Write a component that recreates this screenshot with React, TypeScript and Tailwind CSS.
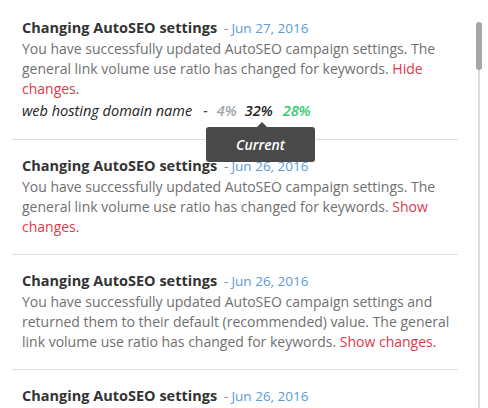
import React from 'react';

type Item = {
  date: string;
  body: React.ReactNode;
  keywords?: boolean;
};

const Link = ({ children }: { children: React.ReactNode }) => (
  <span className="text-[#e0394b]">{children}</span>
);

const items: Item[] = [
  {
    date: 'Jun 27, 2016',
    body: (
      <>
        You have successfully updated AutoSEO campaign settings. The
        <br />
        general link volume use ratio has changed for keywords. <Link>Hide</Link>
        <br />
        <Link>changes.</Link>
      </>
    ),
    keywords: true,
  },
  {
    date: 'Jun 26, 2016',
    body: (
      <>
        You have successfully updated AutoSEO campaign settings. The
        <br />
        general link volume use ratio has changed for keywords. <Link>Show</Link>
        <br />
        <Link>changes.</Link>
      </>
    ),
  },
  {
    date: 'Jun 26, 2016',
    body: (
      <>
        You have successfully updated AutoSEO campaign settings and
        <br />
        returned them to their default (recommended) value. The general
        <br />
        link volume use ratio has changed for keywords. <Link>Show changes.</Link>
      </>
    ),
  },
  {
    date: 'Jun 26, 2016',
    body: (
      <>
        You have successfully updated AutoSEO campaign settings. The
        <br />
        general link volume use ratio has changed for keywords. <Link>Show</Link>
        <br />
        <Link>changes.</Link>
      </>
    ),
  },
];

const App = () => {
  return (
    <div
      className="relative h-[408px] w-[488px] overflow-hidden bg-white"
      style={{ fontFamily: '"Open Sans", "Liberation Sans", sans-serif' }}
    >
      {/* Scrollbar */}
      <div className="absolute right-[8px] top-[22px] bottom-0 w-[2px] bg-[#dcdcdc]" />
      <div className="absolute right-[6px] top-[22px] h-[48px] w-[6px] rounded-full bg-[#a6a6a6]" />

      <div className="w-[458px] pl-[12px]">
        {items.map((item, i) => (
          <div
            key={i}
            className={
              i === 0
                ? 'relative px-[10px] pt-[17px] pb-[18px]'
                : 'relative border-t border-[#dedede] px-[10px] pt-[15px] pb-[17px]'
            }
          >
            <div className="h-[22px] whitespace-nowrap text-[14.5px] leading-[22px]">
              <span className="font-bold text-[#333333]">Changing AutoSEO settings</span>
              <span className="ml-[7px] text-[13.5px] text-[#8a8a8a]">-</span>
              <span className="ml-[3px] text-[13.5px] text-[#5b9bd5]">{item.date}</span>
            </div>
            <p className="whitespace-nowrap text-[14px] leading-[20px] text-[#707070]">{item.body}</p>
            {item.keywords && (
              <div className="relative mt-[2px] flex h-[20px] items-center text-[14.5px] italic leading-[20px]">
                <span className="text-[#222222]">web hosting domain name</span>
                <span className="ml-[11px] text-[#444444]">-</span>
                <span className="ml-[9px] font-semibold text-[#a0a4aa]">4%</span>
                <span className="ml-[8px] font-semibold text-[#222222]">32%</span>
                <span className="ml-[10px] font-semibold text-[#2ecc71]">28%</span>
                {/* Tooltip */}
                <div className="absolute left-[184px] top-[26px] z-10 flex h-[35px] w-[109px] items-center justify-center rounded-[3px] bg-[#4a4a4a] text-[14px] font-semibold text-white">
                  <span className="absolute -top-[5px] left-[51px] h-0 w-0 border-x-[5px] border-b-[5px] border-x-transparent border-b-[#4a4a4a]" />
                  Current
                </div>
              </div>
            )}
          </div>
        ))}
      </div>
    </div>
  );
};

export default App;
